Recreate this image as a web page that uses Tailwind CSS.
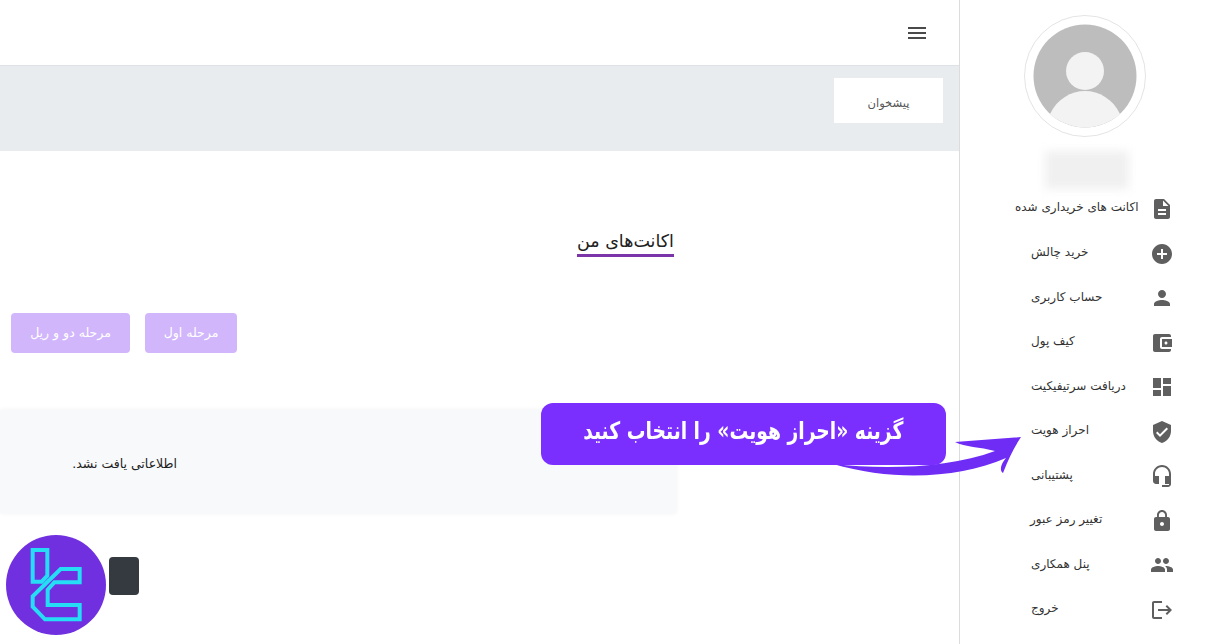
<!DOCTYPE html>
<html lang="fa">

<head>
    <title>اکانت‌های من</title>
    <meta charset="UTF-8" />
    <meta name="viewport" content="width=device-width, initial-scale=1.0" />
    <script src="https://cdn.jsdelivr.net/npm/@tailwindcss/browser@4"></script>
</head>

<body class="relative w-[1209px] h-[644px] overflow-hidden bg-white font-['DejaVu_Sans',sans-serif]">
    <div class="flex h-[644px]">
        <!-- main column -->
        <main class="w-[959px] shrink-0">
            <header class="flex justify-end items-center h-[66px] pr-[30px] border-b border-[#dee2e6]">
                <svg class="w-[24px] h-[24px] fill-[#4a4a4a]" viewBox="0 0 24 24"><path d="M3 18h18v-2H3v2zm0-5h18v-2H3v2zm0-7v2h18V6H3z"/></svg>
            </header>
            <div class="flex justify-end h-[85px] pt-[12px] pr-[16px] bg-[#e9ecef]">
                <div dir="rtl" class="flex items-center justify-center w-[109px] h-[45px] pt-[6px] bg-white text-[11.5px] text-[#555]">پیشخوان</div>
            </div>

            <div class="flex justify-end pt-[80px] pr-[285px]">
                <h2 dir="rtl" class="h-[26px] border-b-[3px] border-[#7b35a8] text-[17.5px] leading-[21px] text-[#222]">اکانت‌های من</h2>
            </div>

            <div dir="rtl" class="flex gap-[15px] pt-[56px] pr-[722px]">
                <button class="w-[92px] h-[40px] pt-[1px] rounded-[4px] bg-[#d1b6fb] text-[12.5px] text-white">مرحله اول</button>
                <button class="w-[119px] h-[40px] pt-[1px] rounded-[4px] bg-[#d1b6fb] text-[12.5px] text-white">مرحله دو و ریل</button>
            </div>

            <div dir="rtl" class="flex items-center w-[676px] h-[103px] mt-[57px] pt-[5px] pr-[499px] bg-[#f8f9fa] shadow-[0_0_5px_rgba(0,0,0,0.06)] text-[12.5px] text-[#222]">اطلاعاتی یافت نشد.</div>
        </main>

        <!-- sidebar -->
        <aside class="w-[250px] shrink-0 border-l border-[#dcdcdc] pt-[15px]">
            <svg class="w-[122px] h-[122px] ml-[64px]" viewBox="0 0 122 122">
                <circle cx="61" cy="61" r="60.5" fill="#fff" stroke="#e4e4e4"/>
                <circle cx="61" cy="61" r="51.5" fill="#bdbdbd"/>
                <circle cx="61" cy="56" r="19" fill="#f3f3f3"/>
                <path d="M26 99 C33 84 47 76 61 76 C75 76 89 84 96 99 C87 107 74 112.500 61 112.500 C48 112.500 35 107 26 99 Z" fill="#f3f3f3"/>
            </svg>
            <div class="w-[84px] h-[38px] ml-[85px] mt-[14px] mb-[1px] bg-[#f0f0f0] blur-[5px]"></div>

            <nav dir="ltr" class="-mt-[3px] text-[12px] text-[#333]">
                <a class="flex items-center h-[44.5px] pr-[35px]">
                    <span dir="rtl" class="ml-[55px] mb-[4px]">اکانت های خریداری شده</span>
                    <svg class="ml-auto w-[24px] h-[24px] fill-[#5f5f5f]" viewBox="0 0 24 24"><path d="M14 2H6c-1.1 0-1.99.9-1.99 2L4 20c0 1.1.89 2 1.99 2H18c1.1 0 2-.9 2-2V8l-6-6zm2 16H8v-2h8v2zm0-4H8v-2h8v2zm-3-5V3.5L18.500 9H13z"/></svg>
                </a>
                <a class="flex items-center h-[44.5px] pr-[35px]">
                    <span dir="rtl" class="ml-[71px] mb-[3px]">خرید چالش</span>
                    <svg class="ml-auto w-[24px] h-[24px] fill-[#5f5f5f]" viewBox="0 0 24 24"><path d="M12 2C6.48 2 2 6.48 2 12s4.48 10 10 10 10-4.48 10-10S17.52 2 12 2zm5 11h-4v4h-2v-4H7v-2h4V7h2v4h4v2z"/></svg>
                </a>
                <a class="flex items-center h-[44.5px] pr-[35px]">
                    <span dir="rtl" class="ml-[71px] mb-[3px]">حساب کاربری</span>
                    <svg class="ml-auto w-[24px] h-[24px] fill-[#5f5f5f]" viewBox="0 0 24 24"><path d="M12 12c2.21 0 4-1.79 4-4s-1.79-4-4-4-4 1.79-4 4 1.79 4 4 4zm0 2c-2.67 0-8 1.34-8 4v2h16v-2c0-2.66-5.33-4-8-4z"/></svg>
                </a>
                <a class="flex items-center h-[44.5px] pr-[35px]">
                    <span dir="rtl" class="ml-[71px] mb-[3px]">کیف پول</span>
                    <svg class="ml-auto w-[24px] h-[24px] fill-[#5f5f5f]" viewBox="0 0 24 24"><path d="M21 18v1c0 1.1-.9 2-2 2H5c-1.11 0-2-.9-2-2V5c0-1.1.89-2 2-2h14c1.100 0 2 .9 2 2v1h-9c-1.110 0-2 .9-2 2v8c0 1.100.89 2 2 2h9zm-9-2h10V8H12v8zm4-2.500c-.83 0-1.500-.67-1.500-1.500s.67-1.500 1.500-1.500 1.500.67 1.500 1.500-.67 1.500-1.500 1.500z"/></svg>
                </a>
                <a class="flex items-center h-[44.5px] pr-[35px]">
                    <span dir="rtl" class="ml-[71px] mb-[3px]">دریافت سرتیفیکیت</span>
                    <svg class="ml-auto w-[24px] h-[24px] fill-[#5f5f5f]" viewBox="0 0 24 24"><path d="M3 13h8V3H3v10zm0 8h8v-6H3v6zm10 0h8V11h-8v10zm0-18v6h8V3h-8z"/></svg>
                </a>
                <a class="flex items-center h-[44.5px] pr-[35px]">
                    <span dir="rtl" class="ml-[71px] mb-[3px]">احراز هویت</span>
                    <svg class="ml-auto w-[24px] h-[24px] fill-[#5f5f5f]" viewBox="0 0 24 24"><path d="M12 1L3 5v6c0 5.550 3.840 10.740 9 12 5.160-1.260 9-6.450 9-12V5l-9-4zm-2 16l-4-4 1.410-1.410L10 14.170l6.590-6.590L18 9l-8 8z"/></svg>
                </a>
                <a class="flex items-center h-[44.5px] pr-[35px]">
                    <span dir="rtl" class="ml-[71px] mb-[3px]">پشتیبانی</span>
                    <svg class="ml-auto w-[24px] h-[24px] fill-[#5f5f5f]" viewBox="0 0 24 24"><path d="M12 1c-4.970 0-9 4.030-9 9v7c0 1.660 1.340 3 3 3h3v-8H5v-2c0-3.870 3.130-7 7-7s7 3.130 7 7v2h-4v8h4v1h-7v2h6c1.660 0 3-1.340 3-3V10c0-4.970-4.030-9-9-9z"/></svg>
                </a>
                <a class="flex items-center h-[44.5px] pr-[35px]">
                    <span dir="rtl" class="ml-[70px] mb-[3px]">تغییر رمز عبور</span>
                    <svg class="ml-auto w-[24px] h-[24px] fill-[#5f5f5f]" viewBox="0 0 24 24"><path d="M18 8h-1V6c0-2.760-2.240-5-5-5S7 3.240 7 6v2H6c-1.100 0-2 .9-2 2v10c0 1.100.9 2 2 2h12c1.100 0 2-.9 2-2V10c0-1.100-.9-2-2-2zm-6 9c-1.100 0-2-.9-2-2s.9-2 2-2 2 .9 2 2-.9 2-2 2zm3.100-9H8.900V6c0-1.710 1.390-3.100 3.100-3.100 1.710 0 3.100 1.390 3.100 3.100v2z"/></svg>
                </a>
                <a class="flex items-center h-[44.5px] pr-[35px]">
                    <span dir="rtl" class="ml-[71px] mb-[3px]">پنل همکاری</span>
                    <svg class="ml-auto w-[24px] h-[24px] fill-[#5f5f5f]" viewBox="0 0 24 24"><path d="M16 11c1.660 0 2.990-1.340 2.990-3S17.660 5 16 5c-1.660 0-3 1.340-3 3s1.340 3 3 3zm-8 0c1.660 0 2.990-1.340 2.990-3S9.660 5 8 5C6.340 5 5 6.340 5 8s1.340 3 3 3zm0 2c-2.330 0-7 1.170-7 3.500V19h14v-2.500c0-2.330-4.670-3.500-7-3.500zm8 0c-.29 0-.62.02-.97.05 1.160.84 1.970 1.970 1.970 3.450V19h6v-2.500c0-2.330-4.670-3.500-7-3.500z"/></svg>
                </a>
                <a class="flex items-center h-[44.5px] pr-[35px]">
                    <span dir="rtl" class="ml-[71px] mb-[3px]">خروج</span>
                    <svg class="ml-auto w-[24px] h-[24px] fill-[#5f5f5f]" viewBox="0 0 24 24"><path d="M17 7l-1.410 1.410L18.170 11H8v2h10.170l-2.580 2.580L17 17l5-5zM4 5h8V3H4c-1.100 0-2 .9-2 2v14c0 1.100.9 2 2 2h8v-2H4V5z"/></svg>
                </a>
            </nav>
        </aside>
    </div>

    <!-- tutorial overlay -->
    <svg class="absolute left-[820px] top-[430px] w-[210px] h-[55px] fill-[#6f2cf5]" viewBox="820 430 210 55">
        <path d="M955 442 L1021 437 Q1011 452 1003 473 C999 470 1001 464 1006 458 C960 478 895 482 833 464 C885 470 950 468 995 451 C980 447 965 447 955 442 Z"/>
    </svg>
    <div dir="rtl" class="absolute left-[541px] top-[403px] flex items-center justify-center w-[405px] h-[62px] pb-[6px] rounded-[12px] bg-[#7b2fff] text-[24px] font-bold text-white">
        <span class="inline-block scale-x-[.78] whitespace-nowrap">گزینه «احراز هویت» را انتخاب کنید</span>
    </div>

    <svg class="absolute left-0 top-[525px] w-[150px] h-[119px]" viewBox="0 0 450 357">
        <circle cx="168" cy="180" r="150" fill="#7030e0"/>
        <g fill="none" stroke="#25def5" stroke-width="12">
            <path d="M98 75 H142 V152 L125 170 H98 Z"/>
            <path d="M182 132 H239 V172 H163 L143 194 V240 H239 V283 H135 L98 245 V214 Z"/>
        </g>
    </svg>
    <div class="absolute left-[109px] top-[557px] w-[30px] h-[38px] rounded-[4px] bg-[#343a40]"></div>
</body>

</html>
